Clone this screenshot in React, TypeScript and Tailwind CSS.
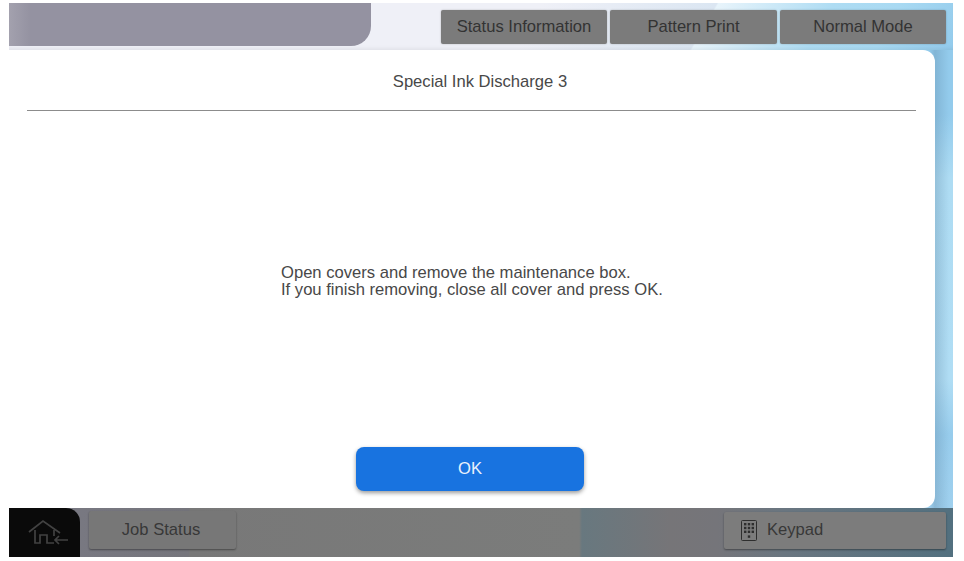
const font = "font-['Liberation_Sans',Arial,sans-serif]";

function HomeIcon() {
  return (
    <svg width="42" height="28" viewBox="0 0 42 28" fill="none" stroke="#424242" strokeWidth="1.7">
      <path d="M2 14 L16 3 L33 15" />
      <path d="M8 12 V25 H13 V17 H20 V25 H27" />
      <path d="M27 12 V18" />
      <path d="M41 22 H28 M32 18 L28 22 L32 26" />
    </svg>
  );
}

function KeypadIcon() {
  return (
    <svg width="16" height="21" viewBox="0 0 16 21" fill="none">
      <rect x="0.5" y="0.5" width="15" height="20" rx="1" stroke="#2e2e2e" />
      <g fill="#2e2e2e">
        <rect x="3" y="3" width="2.4" height="2.4" />
        <rect x="6.8" y="3" width="2.4" height="2.4" />
        <rect x="10.6" y="3" width="2.4" height="2.4" />
        <rect x="3" y="6.8" width="2.4" height="2.4" />
        <rect x="6.8" y="6.8" width="2.4" height="2.4" />
        <rect x="10.6" y="6.8" width="2.4" height="2.4" />
        <rect x="3" y="10.6" width="2.4" height="2.4" />
        <rect x="6.8" y="10.6" width="2.4" height="2.4" />
        <rect x="10.6" y="10.6" width="2.4" height="2.4" />
        <rect x="6.8" y="15.4" width="2.4" height="2.4" />
      </g>
    </svg>
  );
}

function TopButton({ label, width }: { label: string; width: string }) {
  return (
    <div
      className={`flex h-[34px] items-center justify-center rounded-[2px] bg-[#7b7b7b] text-[16.6px] text-[#333333] shadow-[0_0_2px_rgba(0,0,0,0.25)] ${width}`}
    >
      {label}
    </div>
  );
}

export default function App() {
  return (
    <div className={`h-[561px] w-[964px] overflow-hidden bg-white pl-[9px] pt-[3px] ${font}`}>
      <div className="flex h-[554px] w-[944px] flex-col">
        <div className="flex h-[47px] shrink-0 bg-[linear-gradient(120deg,#eff0f7_0%,#eff0f7_55%,#dbe6f2_72.9%,#e8f4fb_73.1%,#aedcf3_85%,#a8d9f2_92%,#93cbec_100%)] shadow-[inset_0_-4px_4px_-3px_rgba(0,0,0,0.08)]">
          <div className="h-[43px] w-[362px] rounded-br-[20px] bg-[linear-gradient(90deg,#a3a1ae_0%,#9492a1_6%,#9492a1_100%)]" />
          <div className="ml-[70px] mt-[7px] flex gap-[3px]">
            <TopButton label="Status Information" width="w-[166px]" />
            <TopButton label="Pattern Print" width="w-[167px]" />
            <TopButton label="Normal Mode" width="w-[166px]" />
          </div>
        </div>

        <div className="h-[458px] shrink-0 bg-[linear-gradient(90deg,transparent_920px,rgba(90,130,160,0.3)_926px,transparent_940px),linear-gradient(180deg,#93cbec_0%,#93cbec_14%,#aedcf3_28%,#b0ddf4_72%,#97ccec_84%,#9fd0ee_100%)]">
          <div className="flex h-full w-[926px] flex-col rounded-r-[12px] bg-white">
            <div className="ml-[18px] mr-[19px] flex h-[61px] shrink-0 items-center justify-center border-b border-[#8c8c8c] pl-[17px] pt-[4px] text-[16.6px] text-[#484848]">
              Special Ink Discharge 3
            </div>
            <div className="flex h-[336px] shrink-0 items-center pl-[272px] pt-[4px] text-[16.6px] leading-[17px] text-[#484848]">
              <p>
                Open covers and remove the maintenance box.
                <br />
                If you finish removing, close all cover and press OK.
              </p>
            </div>
            <div className="ml-[347px] flex h-[44px] w-[228px] items-center justify-center rounded-[8px] bg-[#1873e0] text-[16.6px] text-[#e8f1fc] shadow-[0_2px_4px_rgba(0,0,0,0.4)]">
              OK
            </div>
          </div>
        </div>

        <div className="flex h-[49px] shrink-0 bg-[linear-gradient(90deg,#7a7a84_0%,#75757c_19%,#787878_19.2%,#7b7c7b_60.4%,#68787f_60.7%,#767578_70%,#75757a_75%,#6a7680_82%,#52707f_100%)]">
          <div className="flex h-[49px] w-[71px] items-center justify-center rounded-tr-[14px] bg-[#0a0a0a] pb-[1px] pl-[7px]">
            <HomeIcon />
          </div>
          <div className="ml-[9px] mt-[3px] flex h-[38px] w-[147px] items-center justify-center rounded-[2px] bg-[#777777] pr-[3px] text-[16.6px] text-[#383838] shadow-[0_1px_2px_rgba(0,0,0,0.4)]">
            Job Status
          </div>
          <div className="ml-[488px] mt-[4px] flex h-[37px] w-[222px] items-center rounded-[2px] bg-[#7c7c7c] pl-[17px] text-[16.6px] text-[#383838] shadow-[0_1px_2px_rgba(0,0,0,0.4)]">
            <KeypadIcon />
            <span className="ml-[10px]">Keypad</span>
          </div>
        </div>
      </div>
    </div>
  );
}
